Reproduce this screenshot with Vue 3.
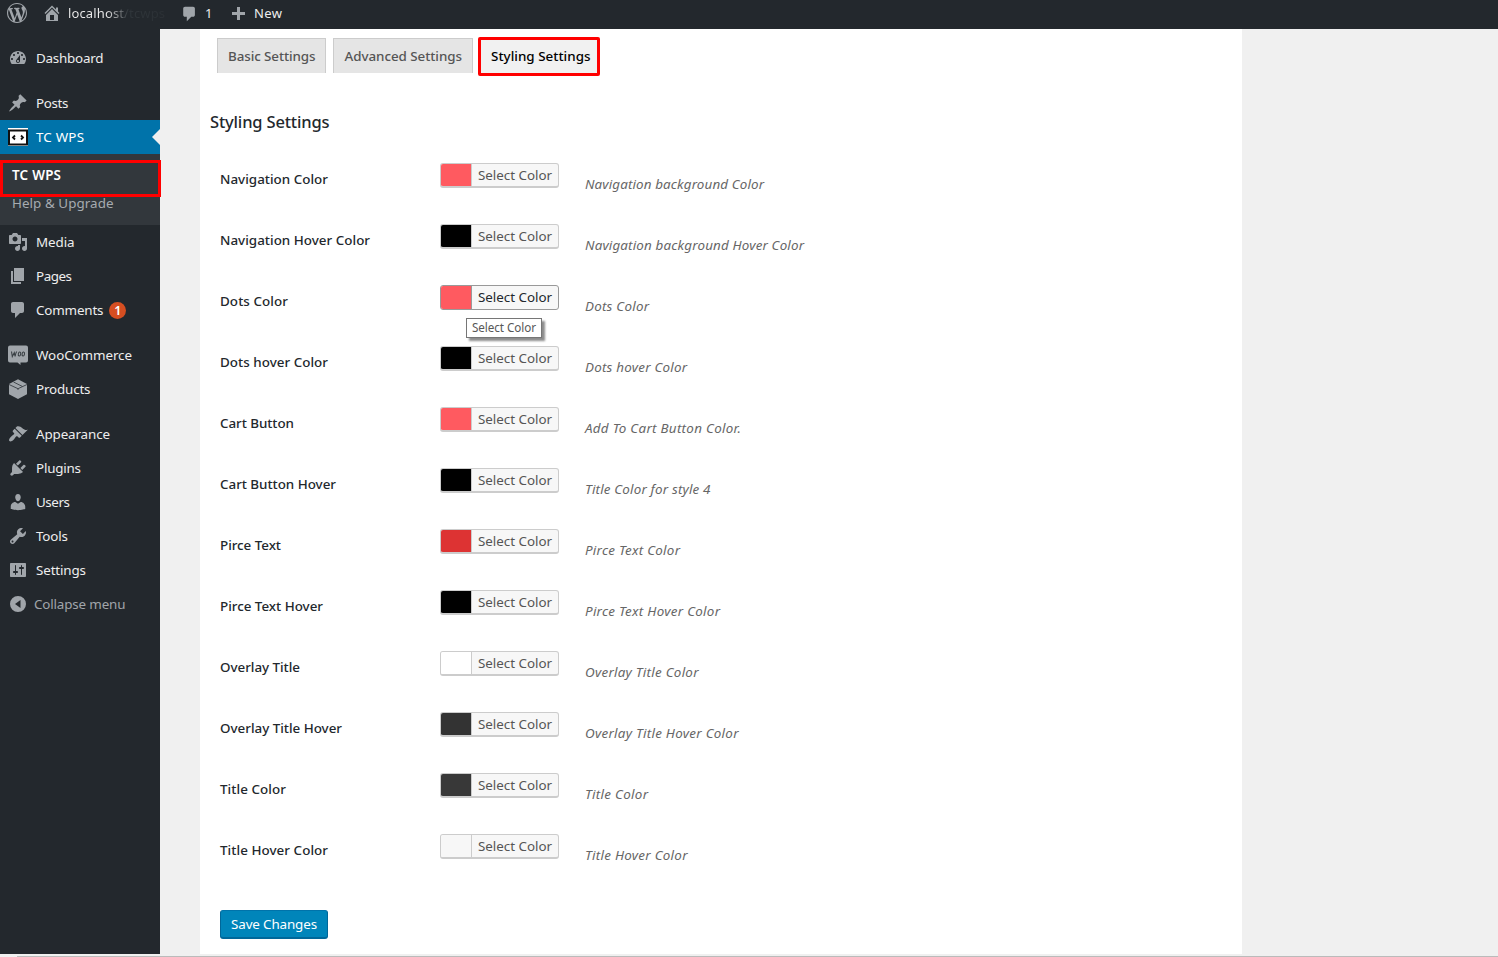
<script setup>
// Spreads a label's letters so that it occupies the given width in pixels.
const vFit = {
  mounted(el, { value }) {
    if (!value) return
    const natural = el.getBoundingClientRect().width
    el.style.letterSpacing = `${(value - 1 - natural) / (el.textContent.trim().length - 1)}px`
  }
}

const icons = {
  wordpress: 'M20 10c0-5.51-4.49-10-10-10C4.48 0 0 4.49 0 10c0 5.52 4.48 10 10 10 5.51 0 10-4.48 10-10zM7.78 15.37L4.37 6.22c.55-.02 1.17-.08 1.17-.08.5-.06.44-1.13-.06-1.11 0 0-1.45.11-2.37.11-.18 0-.37 0-.58-.01C4.12 2.69 6.87 1.11 10 1.11c2.33 0 4.45.87 6.05 2.34-.68-.11-1.65.39-1.65 1.58 0 .74.45 1.36.9 2.1.35.61.55 1.36.55 2.46 0 1.49-1.4 5-1.4 5l-3.03-8.37c.54-.02.82-.17.82-.17.5-.05.44-1.25-.06-1.22 0 0-1.44.12-2.38.12-.87 0-2.33-.12-2.33-.12-.5-.03-.56 1.2-.06 1.22l.92.08 1.26 3.41zM17.41 10c.24-.64.74-1.87.43-4.25.7 1.29 1.05 2.71 1.05 4.25 0 3.29-1.73 6.24-4.4 7.78.97-2.59 1.94-5.2 2.92-7.78zM6.1 18.09C3.12 16.65 1.11 13.53 1.11 10c0-1.3.23-2.48.72-3.59C3.25 10.3 4.67 14.2 6.1 18.09zm4.03-6.63l2.58 6.98c-.86.29-1.76.45-2.71.45-.79 0-1.57-.11-2.29-.33.81-2.38 1.62-4.74 2.42-7.1z',
  home: 'M16 8.5l1.53 1.53-1.06 1.06L10 4.6l-6.47 6.49-1.06-1.06L10 2.5l4 4v-2h2v4zm-6-2.46l6 5.99V18H4v-5.97zM12 17v-5H8v5h4z',
  plus: 'M17 9v3h-5v5H9v-5H4V9h5V4h3v5h5z',
  dashboard: 'M3.76 16h12.48c1.1-1.37 1.76-3.11 1.76-5 0-4.42-3.58-8-8-8s-8 3.58-8 8c0 1.89.66 3.63 1.76 5zM10 4c.55 0 1 .45 1 1s-.45 1-1 1-1-.45-1-1 .45-1 1-1zM6 6c.55 0 1 .45 1 1s-.45 1-1 1-1-.45-1-1 .45-1 1-1zm8 0c.55 0 1 .45 1 1s-.45 1-1 1-1-.45-1-1 .45-1 1-1zm-5.37 5.55L12 7v6c0 1.1-.9 2-2 2s-2-.9-2-2c0-.57.24-1.08.63-1.45zM4 10c.55 0 1 .45 1 1s-.45 1-1 1-1-.45-1-1 .45-1 1-1zm12 0c.55 0 1 .45 1 1s-.45 1-1 1-1-.45-1-1 .45-1 1-1zm-5 3c0-.55-.45-1-1-1s-1 .45-1 1 .45 1 1 1 1-.45 1-1z',
  post: 'M10.44 3.02l1.82-1.82 6.36 6.35-1.83 1.82c-1.05-.68-2.48-.57-3.41.36l-.75.75c-.92.93-1.04 2.35-.35 3.41l-1.83 1.82-2.41-2.41-2.8 2.79c-.42.42-3.38 2.71-3.8 2.29s1.86-3.39 2.28-3.81l2.79-2.79L4.1 9.36l1.83-1.82c1.05.69 2.48.57 3.4-.36l.75-.75c.93-.92 1.05-2.35.36-3.41z',
  media: 'M13 11V4c0-.55-.45-1-1-1h-1.67L9 1H5L3.67 3H2c-.55 0-1 .45-1 1v7c0 .55.45 1 1 1h10c.55 0 1-.45 1-1zM7 4.5c1.38 0 2.5 1.12 2.5 2.5S8.38 9.5 7 9.5 4.5 8.38 4.5 7 5.62 4.5 7 4.5zM14 6h5v10.5c0 1.38-1.12 2.5-2.5 2.5S14 17.88 14 16.5s1.12-2.5 2.5-2.5c.17 0 .34.02.5.05V9h-3V6zm-4 8.05V13h2v3.5c0 1.38-1.12 2.5-2.5 2.5S7 17.88 7 16.5 8.12 14 9.5 14c.17 0 .34.02.5.05z',
  page: 'M6 15V2h10v13H6zm-1 1h8v2H3V5h2v11z',
  comment: 'M5 2h9c1.1 0 2 .9 2 2v7c0 1.1-.9 2-2 2h-2l-5 5v-5H5c-1.1 0-2-.9-2-2V4c0-1.1.9-2 2-2z',
  appearance: 'M14.48 11.06L7.41 3.99l1.5-1.5c.5-.56 2.3-.47 3.51.32 1.21.8 1.43 1.28 2.91 2.1 1.18.64 2.45 1.26 4.45.85zm-.71.71L6.7 4.7 4.93 6.47c-.39.39-.39 1.02 0 1.41l1.06 1.06c.39.39.39 1.03 0 1.42-.6.6-1.43 1.11-2.21 1.69-.35.26-.7.53-1.01.84C1.43 14.23.4 16.08 1.4 17.07c.99 1 2.84-.03 4.18-1.36.31-.31.58-.66.85-1.02.57-.78 1.08-1.61 1.69-2.21.39-.39 1.02-.39 1.41 0l1.06 1.06c.39.39 1.02.39 1.41 0z',
  plugins: 'M13.11 4.36L9.87 7.6 8 5.73l3.24-3.24c.35-.34 1.05-.2 1.56.32.52.51.66 1.21.31 1.55zm-8 1.77l.91-1.12 9.01 9.01-1.19.84c-.71.71-2.63 1.16-3.82 1.16H6.14L4.9 17.26c-.59.59-1.54.59-2.12 0-.59-.58-.59-1.53 0-2.12l1.24-1.24v-3.88c0-1.13.4-3.19 1.09-3.89zm7.26 3.97l3.24-3.24c.34-.35 1.04-.21 1.55.31.52.51.66 1.21.31 1.55l-3.24 3.25z',
  users: 'M10 9.25c-2.27 0-2.73-3.44-2.73-3.44C7 4.02 7.82 2 9.97 2c2.16 0 2.98 2.02 2.71 3.81 0 0-.41 3.44-2.68 3.44zm0 2.57L12.72 10c2.39 0 4.52 2.33 4.52 4.53v2.49s-3.65 1.13-7.24 1.13c-3.65 0-7.24-1.13-7.24-1.13v-2.49c0-2.25 1.94-4.48 4.47-4.48z',
  tools: 'M16.68 9.77c-1.34 1.34-3.3 1.67-4.95.99l-5.41 6.52c-.99.99-2.59.99-3.58 0s-.99-2.59 0-3.57l6.52-5.42c-.68-1.65-.35-3.61.99-4.95 1.28-1.28 3.12-1.62 4.72-1.06l-2.89 2.89 2.82 2.82 2.86-2.87c.53 1.58.18 3.39-1.08 4.65zM3.81 16.21c.4.39 1.04.39 1.43 0 .4-.4.4-1.04 0-1.43-.39-.4-1.03-.4-1.43 0-.39.39-.39 1.03 0 1.43z',
  settings: 'M18 16V4c0-.55-.45-1-1-1H3c-.55 0-1 .45-1 1v12c0 .55.45 1 1 1h14c.55 0 1-.45 1-1zM8 11h1c.55 0 1 .45 1 1s-.45 1-1 1H8v1.5c0 .28-.22.5-.5.5s-.5-.22-.5-.5V13H6c-.55 0-1-.45-1-1s.45-1 1-1h1V5.5c0-.28.22-.5.5-.5s.5.22.5.5V11zm5-2h-1c-.55 0-1-.45-1-1s.45-1 1-1h1V5.5c0-.28.22-.5.5-.5s.5.22.5.5V7h1c.55 0 1 .45 1 1s-.45 1-1 1h-1v5.5c0 .28-.22.5-.5.5s-.5-.22-.5-.5V9z',
  collapse: 'M10 2a8 8 0 1 0 0 16 8 8 0 0 0 0-16zM12.5 6v8l-5.5-4z'
}

const menu = [
  { text: 'Dashboard', icon: 'dashboard', w: 68.5 },
  { text: 'Posts', icon: 'post', w: 33.5, gap: true },
  { text: 'TC WPS', icon: 'code', w: 49, current: true },
  { text: 'Media', icon: 'media', w: 39.5 },
  { text: 'Pages', icon: 'page', w: 37 },
  { text: 'Comments', icon: 'comment', w: 68.5, count: 1 },
  { text: 'WooCommerce', icon: 'woo', w: 97, gap: true },
  { text: 'Products', icon: 'box', w: 55.5 },
  { text: 'Appearance', icon: 'appearance', w: 75, gap: true },
  { text: 'Plugins', icon: 'plugins', w: 46 },
  { text: 'Users', icon: 'users', w: 35 },
  { text: 'Tools', icon: 'tools', w: 33 },
  { text: 'Settings', icon: 'settings', w: 51 },
  { text: 'Collapse menu', icon: 'collapse', w: 92.5, muted: true }
]

const tabs = [
  { text: 'Basic Settings', w: 88.5 },
  { text: 'Advanced Settings', w: 118.5 },
  { text: 'Styling Settings', w: 100.5, active: true }
]

const rows = [
  { label: 'Navigation Color', w: 109, color: '#ff5a60', desc: 'Navigation background Color', dw: 180 },
  { label: 'Navigation Hover Color', w: 151, color: '#000000', desc: 'Navigation background Hover Color', dw: 220 },
  { label: 'Dots Color', w: 69, color: '#ff5a60', desc: 'Dots Color', dw: 65, hover: true },
  { label: 'Dots hover Color', w: 109, color: '#000000', desc: 'Dots hover Color', dw: 103 },
  { label: 'Cart Button', w: 75, color: '#ff5a60', desc: 'Add To Cart Button Color.', dw: 157 },
  { label: 'Cart Button Hover', w: 117, color: '#000000', desc: 'Title Color for style 4', dw: 126.5 },
  { label: 'Pirce Text', w: 62, color: '#dd3333', desc: 'Pirce Text Color', dw: 96 },
  { label: 'Pirce Text Hover', w: 104, color: '#000000', desc: 'Pirce Text Hover Color', dw: 136 },
  { label: 'Overlay Title', w: 81, color: '#ffffff', desc: 'Overlay Title Color', dw: 114.5 },
  { label: 'Overlay Title Hover', w: 123, color: '#333333', desc: 'Overlay Title Hover Color', dw: 154.5 },
  { label: 'Title Color', w: 67, color: '#383838', desc: 'Title Color', dw: 64 },
  { label: 'Title Hover Color', w: 109, color: '#f7f7f7', desc: 'Title Hover Color', dw: 103.5 }
]
</script>

<template>
  <div class="page">
    <header class="bar">
      <svg class="ic wp" viewBox="0 0 20 20"><path :d="icons.wordpress" /></svg>
      <svg class="ic home" viewBox="0 0 20 20"><path :d="icons.home" /></svg>
      <div class="site-box"><span v-fit="98" class="site">localhost/tcwps</span></div>
      <svg class="ic bubble" viewBox="0 0 20 20"><path :d="icons.comment" /></svg>
      <span class="num">1</span>
      <svg class="ic plus" viewBox="0 0 20 20"><path :d="icons.plus" /></svg>
      <span v-fit="29">New</span>
    </header>

    <div class="body">
      <nav class="side">
        <template v-for="m in menu" :key="m.text">
          <a class="item" :class="{ gap: m.gap, current: m.current, muted: m.muted }">
            <svg v-if="m.icon === 'code'" class="mi" viewBox="0 0 20 20">
              <rect x="0" y="1" width="20" height="18" fill="#fff" />
              <rect x="1" y="3.5" width="18" height="14" fill="#fff" stroke="#111" stroke-width="2" />
              <path d="M7 8.5L5 10.5l2 2M13 8.500L15 10.500l-2 2" fill="none" stroke="#111" stroke-width="1.800" />
            </svg>
            <svg v-else-if="m.icon === 'woo'" class="mi" viewBox="0 0 20 20">
              <path d="M2 .5h16a2 2 0 0 1 2 2v13a2 2 0 0 1-2 2h-5.500v2.500L9.500 17.500H2a2 2 0 0 1-2-2v-13a2 2 0 0 1 2-2z" />
              <path class="ink" d="M3.500 6.500l.8 5 2-3.800.8 3.800q.4-3.300 1.600-5" />
              <ellipse class="ink" cx="11.500" cy="9" rx="1.200" ry="2" transform="rotate(12 11.500 9)" />
              <ellipse class="ink" cx="15.300" cy="9" rx="1.200" ry="2" transform="rotate(12 15.300 9)" />
            </svg>
            <svg v-else-if="m.icon === 'box'" class="mi" viewBox="0 0 20 20">
              <path d="M10 .2L19 5v10.200L10 20l-9-4.800V5z" />
              <path class="seam" d="M1 5.500l9 4.200 9-4.200M5.500 3l9 4.500M10 9.700V11" />
            </svg>
            <svg v-else class="mi" viewBox="0 0 20 20"><path fill-rule="evenodd" :d="icons[m.icon]" /></svg>
            <span v-fit="m.w" class="mt">{{ m.text }}</span>
            <b v-if="m.count" class="count">{{ m.count }}</b>
          </a>
          <div v-if="m.current" class="sub">
            <a class="sub-on"><span v-fit="50">TC WPS</span></a>
            <a class="sub-off"><span v-fit="102.5">Help &amp; Upgrade</span></a>
          </div>
        </template>
      </nav>

      <main class="panel">
        <div class="tabs">
          <a v-for="t in tabs" :key="t.text" class="tab" :class="{ active: t.active }">
            <span v-fit="t.w">{{ t.text }}</span>
          </a>
        </div>
        <h2><span v-fit="120.5">Styling Settings</span></h2>
        <div v-for="r in rows" :key="r.label" class="row">
          <div class="label"><span v-fit="r.w">{{ r.label }}</span></div>
          <div class="pick">
            <button class="btn" :class="{ hover: r.hover }">
              <i class="swatch" :style="{ background: r.color }"></i>
              <span class="btn-text"><span v-fit="75">Select Color</span></span>
            </button>
            <div v-if="r.hover" class="tip"><span v-fit="65">Select Color</span></div>
          </div>
          <div class="desc"><span v-fit="r.dw">{{ r.desc }}</span></div>
        </div>
        <button class="save"><span v-fit="87">Save Changes</span></button>
      </main>
    </div>
    <footer class="edge"></footer>
  </div>
</template>

<style>
body { margin: 0; overflow: hidden; }
</style>

<style scoped>
.page {
  width: 1498px;
  height: 957px;
  display: flex;
  flex-direction: column;
  background: #f0f0f0;
  font-family: "Noto Sans", "Open Sans", sans-serif;
  font-size: 13.4px;
  color: #23282d;
}
span { white-space: nowrap; }
.bar {
  height: 29px;
  flex: none;
  display: flex;
  align-items: center;
  background: #23282d;
  color: #eee;
  font-size: 13px;
  line-height: 26px;
}
.bar span { position: relative; top: -2px; }
.ic { width: 20px; height: 20px; fill: #a0a5aa; flex: none; }
.wp { margin-left: 7px; position: relative; top: -1.5px; }
.home { margin-left: 15px; margin-right: 6px; position: relative; top: -1.5px; }
.site-box { width: 97px; flex: none; }
.site {
  background: linear-gradient(90deg, #eee 38px, #30363b 60px, #2b3035 97px);
  background-clip: text;
  color: transparent;
}
.bubble { width: 19px; height: 18px; margin-left: 15px; position: relative; top: -.5px; }
.num { width: 8px; margin-left: 6px; }
.plus { margin-left: 15px; margin-right: 6px; position: relative; top: -1.5px; }
.body { height: 925px; display: flex; flex: none; }
.side {
  width: 160px;
  flex: none;
  background: #23282d;
  padding-top: 12px;
  box-sizing: border-box;
}
.item {
  height: 34px;
  display: flex;
  align-items: center;
  padding-left: 8px;
  color: #eee;
  position: relative;
}
.item.gap { margin-top: 11px; }
.mi { width: 20px; height: 20px; fill: #a0a5aa; margin-right: 8px; flex: none; }
.ink { fill: none; stroke: #3a4045; stroke-width: 1.1; }
.seam { fill: none; stroke: #3a4045; stroke-width: .9; }
.item.current { background: #0073aa; color: #fff; }
.item.current::after {
  content: "";
  position: absolute;
  right: 0;
  top: 9px;
  border: 8px solid transparent;
  border-left-width: 0;
  border-right-color: #f0f0f0;
}
.item.muted { color: #a0a5aa; }
.item.muted .mi { margin-right: 6px; }
.count {
  width: 17px;
  height: 17px;
  margin-left: 6px;
  border-radius: 50%;
  background: #d54e21;
  color: #fff;
  font-size: 12.5px;
  font-weight: 600;
  line-height: 17px;
  text-align: center;
}
.sub {
  height: 71px;
  box-sizing: border-box;
  padding-top: 6px;
  background: #32373c;
}
.sub a { display: flex; }
.sub-on {
  width: 161px;
  height: 37px;
  box-sizing: border-box;
  border: 3px solid #ff0000;
  padding: 3px 0 0 9px;
  line-height: 18px;
  font-weight: 600;
  color: #fff;
  position: relative;
}
.sub-off { padding-left: 12px; line-height: 18px; margin-top: -3px; color: #a6abb0; }
.panel {
  width: 1042px;
  box-sizing: border-box;
  margin-left: 40px;
  padding: 8px 0 0 10px;
  background: #fff;
}
.tabs { display: flex; height: 39px; padding-left: 7px; }
.tab {
  width: 109px;
  height: 35px;
  margin: 1px 7px 0 0;
  padding: 0 10px;
  box-sizing: border-box;
  border: 1px solid #ccc;
  border-bottom: 0;
  background: #e5e5e5;
  color: #555;
  font-weight: 500;
  line-height: 34px;
}
.tab + .tab { width: 140px; padding-left: 10.5px; }
.tabs .tab.active {
  height: 39px;
  width: 122px;
  margin: 0 0 0 -2px;
  padding-left: 10px;
  border: 3px solid #ff0000;
  border-radius: 2px;
  background: #f1f1f1;
  color: #000;
  line-height: 32px;
}
h2 {
  margin: 34px 0 0;
  height: 24px;
  line-height: 24px;
  font-size: 16.5px;
  font-weight: 500;
}
.row { height: 61px; display: flex; padding-left: 10px; }
h2 + .row { margin-top: 29px; }
.label { width: 220px; font-weight: 500; line-height: 18px; padding-top: 7px; }
.pick { width: 145px; position: relative; }
.btn {
  width: 119px;
  height: 25px;
  display: flex;
  padding: 0;
  border: 1px solid #ccc;
  border-bottom-width: 2px;
  border-radius: 3px;
  background: #f7f7f7;
  color: #555;
  font: inherit;
  box-sizing: border-box;
  overflow: hidden;
}
.swatch { width: 30px; height: 100%; flex: none; }
.btn-text { border-left: 1px solid #ccc; padding-left: 6px; line-height: 22px; height: 100%; }
.btn.hover { border-color: #999; border-bottom-width: 1.5px; color: #23282d; }
.btn.hover .btn-text { border-color: #999; }
.tip {
  position: absolute;
  left: 26px;
  top: 33px;
  width: 76px;
  height: 20px;
  box-sizing: border-box;
  border: 1px solid #767676;
  padding-left: 5px;
  background: #fff;
  color: #575757;
  font-size: 11.7px;
  line-height: 17px;
  box-shadow: 3px 3px 2px rgba(0, 0, 0, .45);
}
.desc { padding-top: 12px; line-height: 18px; font-size: 13.4px; font-style: italic; color: #666; }
.save {
  display: block;
  width: 108px;
  height: 29px;
  margin: 15px 0 0 10px;
  padding: 0;
  border: 1px solid #006799;
  border-top-color: #0073aa;
  border-bottom-width: 2px;
  border-radius: 3px;
  background: #0085ba;
  color: #fff;
  font: inherit;
  line-height: 26px;
}
.edge { height: 3px; flex: none; box-sizing: border-box; margin-left: 17px; border-bottom: 1px solid #bbb; }
</style>
